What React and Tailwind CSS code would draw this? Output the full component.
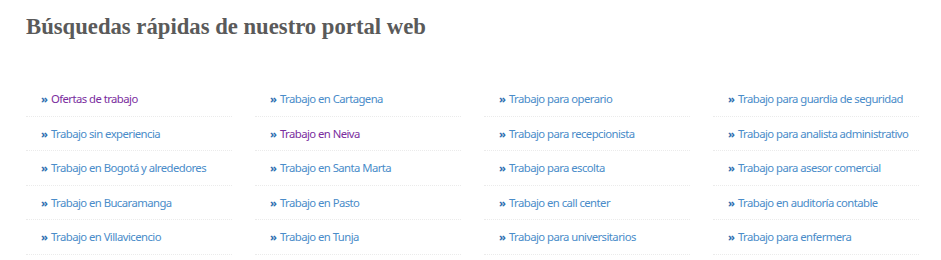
import React from "react";

const cols = [
  [
    ["Ofertas de trabajo", true],
    ["Trabajo sin experiencia"],
    ["Trabajo en Bogotá y alrededores"],
    ["Trabajo en Bucaramanga"],
    ["Trabajo en Villavicencio"],
  ],
  [
    ["Trabajo en Cartagena"],
    ["Trabajo en Neiva", true],
    ["Trabajo en Santa Marta"],
    ["Trabajo en Pasto"],
    ["Trabajo en Tunja"],
  ],
  [
    ["Trabajo para operario"],
    ["Trabajo para recepcionista"],
    ["Trabajo para escolta"],
    ["Trabajo en call center"],
    ["Trabajo para universitarios"],
  ],
  [
    ["Trabajo para guardia de seguridad"],
    ["Trabajo para analista administrativo"],
    ["Trabajo para asesor comercial"],
    ["Trabajo en auditoría contable"],
    ["Trabajo para enfermera"],
  ],
];

export default function App() {
  return (
    <div className="w-[941px] h-[260px] bg-white pl-[26px] pr-[22px] pt-[12px] overflow-hidden">
      <h2
        className="text-[22.7px] leading-[30px] font-bold text-[#5a5a5a]"
        style={{ fontFamily: '"Liberation Serif", serif' }}
      >
        Búsquedas rápidas de nuestro portal web
      </h2>
      <div className="grid grid-cols-4 gap-x-[23px] mt-[40px]">
        {cols.map((col, ci) => (
          <ul key={ci} className="flex flex-col">
            {col.map(([t, visited], i) => (
              <li
                key={i}
                className="h-[34.5px] flex items-center pl-[15px] pt-[2px] border-b border-dotted border-[#ebebeb] text-[11.3px] tracking-[-0.55px] whitespace-nowrap"
                style={{ fontFamily: '"Noto Sans", sans-serif' }}
              >
                <span className="text-[#2f6fb0] font-bold tracking-[-1px] mr-[4px]">»</span>
                <span className={visited ? "text-[#7a2d9e]" : "text-[#4a8cc9]"}>{t}</span>
              </li>
            ))}
          </ul>
        ))}
      </div>
    </div>
  );
}
